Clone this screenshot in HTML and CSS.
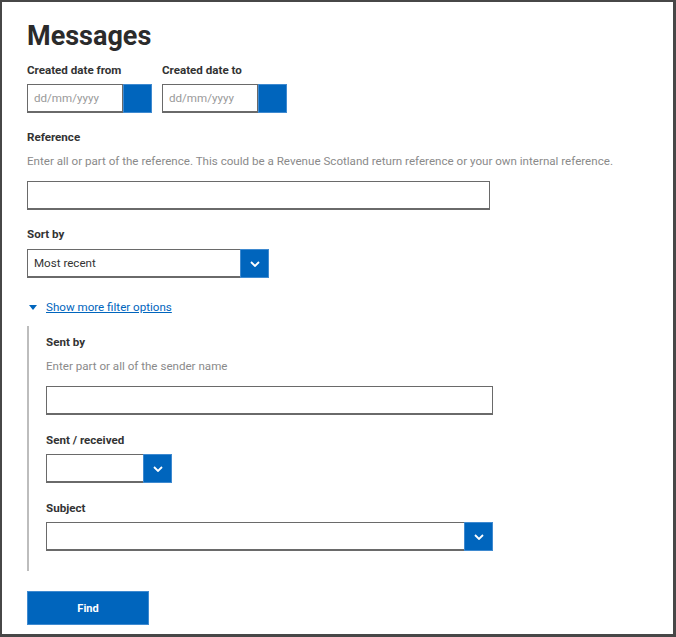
FILE: index.html
```html
<!DOCTYPE html>
<html lang="en">
<head>
<meta charset="utf-8">
<title>Messages</title>
<link rel="stylesheet" href="styles.css">
</head>
<body>
<div class="frame">
  <h1 class="title">Messages</h1>

  <div class="date-row">
    <div class="date-field">
      <label class="label">Created date from</label>
      <div class="date-control">
        <input class="date-input" type="text" placeholder="dd/mm/yyyy">
        <span class="date-btn"></span>
      </div>
    </div>
    <div class="date-field">
      <label class="label">Created date to</label>
      <div class="date-control">
        <input class="date-input" type="text" placeholder="dd/mm/yyyy">
        <span class="date-btn"></span>
      </div>
    </div>
  </div>

  <div class="group">
    <label class="label">Reference</label>
    <p class="hint">Enter all or part of the reference. This could be a Revenue Scotland return reference or your own internal reference.</p>
    <input class="text-input ref-input" type="text">
  </div>

  <div class="group">
    <label class="label">Sort by</label>
    <div class="select sort-select">
      <span class="select-value">Most recent</span>
      <span class="select-btn"><svg width="10" height="6" viewBox="0 0 10 6"><path d="M1 1 L5 5 L9 1" fill="none" stroke="#fff" stroke-width="1.8"/></svg></span>
    </div>
  </div>

  <div class="toggle">
    <span class="toggle-arrow"></span>
    <a class="toggle-link" href="#">Show more filter options</a>
  </div>

  <div class="more">
    <div class="group-first">
      <label class="label">Sent by</label>
      <p class="hint">Enter part or all of the sender name</p>
      <input class="text-input sender-input" type="text">
    </div>
    <div class="group">
      <label class="label">Sent / received</label>
      <div class="select small-select">
        <span class="select-value"></span>
        <span class="select-btn"><svg width="10" height="6" viewBox="0 0 10 6"><path d="M1 1 L5 5 L9 1" fill="none" stroke="#fff" stroke-width="1.8"/></svg></span>
      </div>
    </div>
    <div class="group">
      <label class="label">Subject</label>
      <div class="select subject-select">
        <span class="select-value"></span>
        <span class="select-btn"><svg width="10" height="6" viewBox="0 0 10 6"><path d="M1 1 L5 5 L9 1" fill="none" stroke="#fff" stroke-width="1.8"/></svg></span>
      </div>
    </div>
  </div>

  <button class="find-btn" type="button">Find</button>
</div>
</body>
</html>
```
FILE: styles.css
```css
* { box-sizing: border-box; }

html, body {
  margin: 0;
  padding: 0;
  background: #fff;
}

body {
  font-family: Roboto, "Liberation Sans", Arial, sans-serif;
  color: #333;
}

.frame {
  width: 676px;
  height: 637px;
  border: 2px solid #474747;
  border-right: 3px solid #474747;
  border-bottom: 3px solid #474747;
  padding: 18px 0 0 25px;
  background: #fff;
}

.title {
  margin: 0;
  font-size: 27px;
  line-height: 32px;
  font-weight: 700;
  color: #2b2b2b;
}

.label {
  display: block;
  font-size: 11.6px;
  line-height: 16px;
  font-weight: 700;
  color: #333;
}

.hint {
  margin: 8px 0 0;
  font-size: 11.6px;
  line-height: 16px;
  color: #8a8a8a;
}

.date-row {
  display: flex;
  gap: 10px;
  margin-top: 10px;
}

.date-control {
  display: flex;
  margin-top: 6px;
  width: 125px;
  height: 29px;
}

.date-input {
  width: 96px;
  height: 29px;
  margin: 0;
  border: 1px solid #6a6a6a;
  border-bottom-width: 2px;
  padding: 0 0 0 6px;
  font-family: inherit;
  font-size: 11.6px;
  color: #333;
  outline: none;
}

.date-input::placeholder { color: #9a9a9a; }

.date-btn {
  width: 29px;
  height: 29px;
  background: #0065bd;
  border: 1px solid #3f8ad0;
}

.group { margin-top: 16px; }

.text-input {
  display: block;
  height: 29px;
  margin: 0;
  border: 1px solid #6a6a6a;
  border-bottom-width: 2px;
  padding: 0 6px;
  font-family: inherit;
  font-size: 11.6px;
  outline: none;
}

.ref-input {
  width: 463px;
  margin-top: 12px;
}

.select {
  display: flex;
  height: 29px;
  margin-top: 7px;
}

.select-value {
  flex: 1;
  height: 29px;
  border: 1px solid #6a6a6a;
  border-bottom-width: 2px;
  border-right: none;
  padding-left: 6px;
  font-size: 11.6px;
  line-height: 26px;
  color: #333;
}

.select-btn {
  width: 29px;
  height: 29px;
  background: #0065bd;
  border: 1px solid #3f8ad0;
  display: flex;
  align-items: center;
  justify-content: center;
}

.sort-select { width: 242px; }
.small-select { width: 126px; }
.subject-select { width: 447px; }

.toggle {
  display: flex;
  align-items: center;
  margin-top: 21px;
  height: 16px;
}

.toggle-arrow {
  width: 0;
  height: 0;
  margin-left: 2px;
  border-left: 4px solid transparent;
  border-right: 4px solid transparent;
  border-top: 5px solid #0065bd;
}

.toggle-link {
  margin-left: 9px;
  font-size: 11.6px;
  line-height: 16px;
  color: #0065bd;
  text-decoration: underline;
}

.more {
  margin-top: 11px;
  border-left: 2px solid #bdbdbd;
  padding: 8px 0 20px 17px;
}

.more .group { margin-top: 17px; }
.more .select { margin-top: 6px; }

.sender-input {
  width: 447px;
  margin-top: 12px;
}

.find-btn {
  display: block;
  margin-top: 20px;
  width: 122px;
  height: 34px;
  background: #0065bd;
  border: 1px solid #3f8ad0;
  color: #fff;
  font-family: inherit;
  font-size: 11px;
  font-weight: 700;
  padding: 0;
}
```
